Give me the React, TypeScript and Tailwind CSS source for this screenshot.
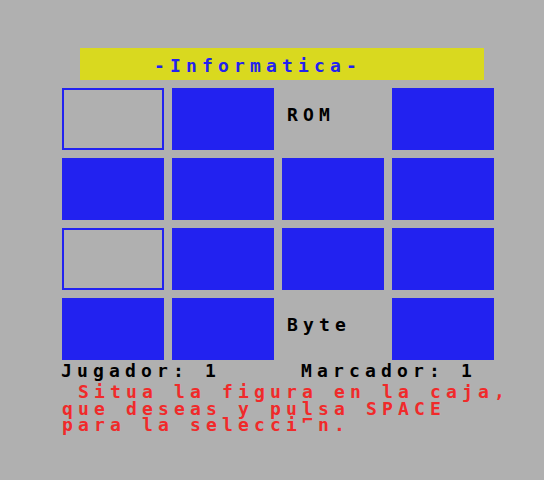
import React from "react";

type Cell = "outline" | "blue" | string;

const cells: Cell[] = [
  "outline", "blue", "ROM", "blue",
  "blue", "blue", "blue", "blue",
  "outline", "blue", "blue", "blue",
  "blue", "blue", "Byte", "blue",
];

function GridCell({ c }: { c: Cell }) {
  if (c === "blue") return <div className="bg-[#2222f0]" />;
  if (c === "outline") return <div className="border-2 border-[#2222f0]" />;
  return <div className="pt-[19px] pl-[5px] text-black">{c}</div>;
}

export default function App() {
  return (
    <div className="w-[544px] h-[480px] bg-[#b0b0b0] pt-[48px] font-['DejaVu_Sans_Mono',monospace] font-bold text-[18px] leading-[16px] tracking-[5.16px] overflow-hidden">
      <div className="ml-[80px] w-[404px] h-[32px] bg-[#d9d91f] pt-[10px] pl-[74px] text-[#2222f0] whitespace-pre">
        -Informatica-
      </div>
      <div className="ml-[62px] mt-[8px] grid grid-cols-[repeat(4,102px)] grid-rows-[repeat(4,62px)] gap-[8px]">
        {cells.map((c, i) => (
          <GridCell key={i} c={c} />
        ))}
      </div>
      <div className="ml-[61px] mt-[3px] whitespace-pre">
        <div className="h-[16px] text-black">Jugador: 1     Marcador: 1</div>
        <div className="ml-[1px] mt-[5px] h-[16px] text-[#f02a2a]"> Situa la figura en la caja,</div>
        <div className="ml-[1px] mt-[1px] h-[16px] text-[#f02a2a]">que deseas y pulsa SPACE</div>
        <div className="ml-[1px] h-[16px] text-[#f02a2a]">
          para la selecci<span className="align-[5px] leading-[0]">⌐</span>n.
        </div>
      </div>
    </div>
  );
}
